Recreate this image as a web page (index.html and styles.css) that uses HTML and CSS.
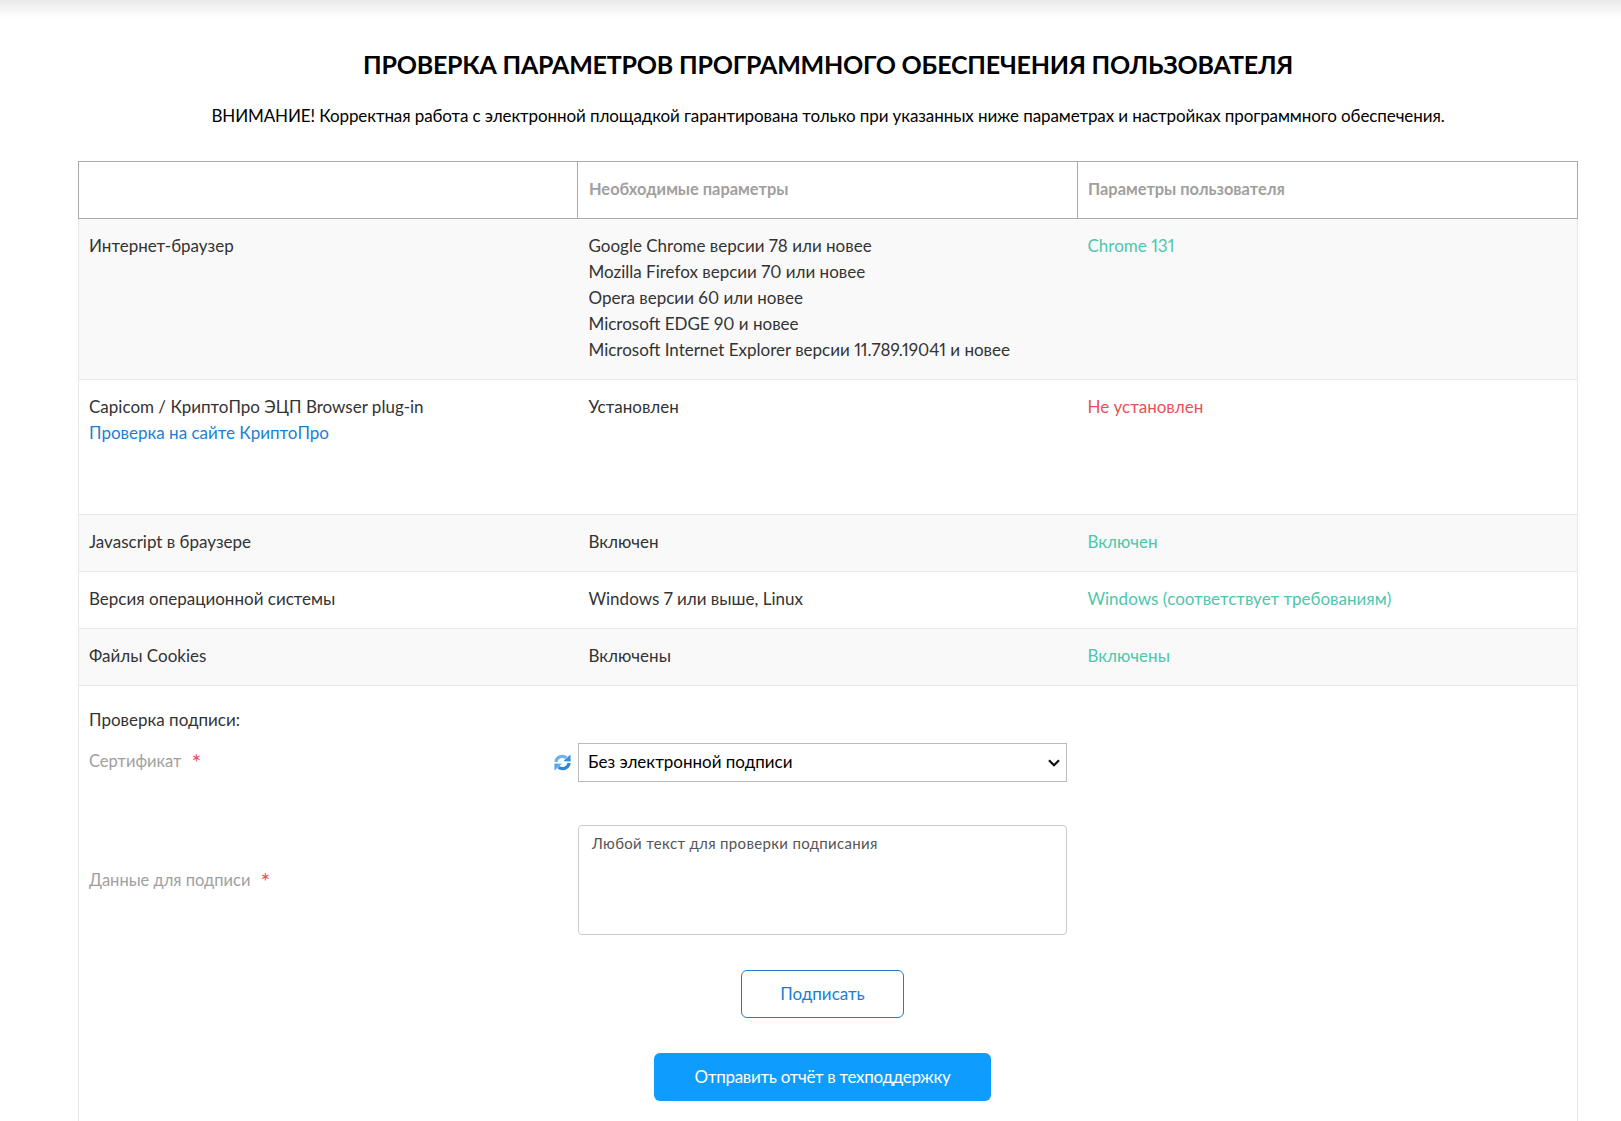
FILE: index.html
```html
<!DOCTYPE html>
<html lang="ru">
<head>
<meta charset="utf-8">
<title>Проверка параметров</title>
<link rel="stylesheet" href="styles.css">
</head>
<body>
<div class="topshade"></div>
<main class="page">
  <h1 class="title">ПРОВЕРКА ПАРАМЕТРОВ ПРОГРАММНОГО ОБЕСПЕЧЕНИЯ ПОЛЬЗОВАТЕЛЯ</h1>
  <p class="notice">ВНИМАНИЕ! Корректная работа с электронной площадкой гарантирована только при указанных ниже параметрах и настройках программного обеспечения.</p>
  <table class="params">
    <thead>
      <tr><th></th><th>Необходимые параметры</th><th>Параметры пользователя</th></tr>
    </thead>
    <tbody>
      <tr>
        <td>Интернет-браузер</td>
        <td>Google Chrome версии 78 или новее<br>Mozilla Firefox версии 70 или новее<br>Opera версии 60 или новее<br>Microsoft EDGE 90 и новее<br>Microsoft Internet Explorer версии 11.789.19041 и новее</td>
        <td class="ok">Chrome 131</td>
      </tr>
      <tr>
        <td>Capicom / КриптоПро ЭЦП Browser plug-in<br><a class="link" href="#">Проверка на сайте КриптоПро</a><br><br>&nbsp;</td>
        <td>Установлен</td>
        <td class="bad">Не установлен</td>
      </tr>
      <tr><td>Javascript в браузере</td><td>Включен</td><td class="ok">Включен</td></tr>
      <tr><td>Версия операционной системы</td><td>Windows 7 или выше, Linux</td><td class="ok">Windows (соответствует требованиям)</td></tr>
      <tr><td>Файлы Cookies</td><td>Включены</td><td class="ok">Включены</td></tr>
    </tbody>
  </table>
  <section class="sign">
    <div class="sign-title">Проверка подписи:</div>
    <div class="field field-cert">
      <div class="label-cell">
        <span class="label">Сертификат<span class="req">*</span></span>
        <svg class="refresh" viewBox="0 0 20 20" width="19" height="19" aria-hidden="true">
          <path fill="none" stroke="#6fb1ec" stroke-width="3.4" d="M3 9.5A7 7 0 0 1 14.2 5"/>
          <path fill="#3a8edc" d="M10.8 8.6 18.6 9 18.4 1.6z"/>
          <path fill="none" stroke="#2f86d8" stroke-width="3.4" d="M17 10.5A7 7 0 0 1 5.8 15"/>
          <path fill="#5aa6ea" d="M9.2 11.4 1.4 11 1.6 18.4z"/>
        </svg>
      </div>
      <select class="cert-select"><option>Без электронной подписи</option></select>
    </div>
    <div class="field field-data">
      <div class="label-cell"><span class="label">Данные для подписи<span class="req">*</span></span></div>
      <textarea class="data-input" placeholder="Любой текст для проверки подписания"></textarea>
    </div>
    <div class="actions">
      <button class="btn btn-outline" type="button">Подписать</button>
      <button class="btn btn-solid" type="button">Отправить отчёт в техподдержку</button>
    </div>
  </section>
</main>
</body>
</html>
```
FILE: styles.css
```css
* { box-sizing: border-box; }
html, body { margin: 0; height: 100%; overflow: hidden; background: #fff; }
body { font-family: Lato, "Noto Sans", sans-serif; font-size: 17px; line-height: 26px; color: #333; position: relative; font-variant-numeric: proportional-nums; }
.topshade { position: absolute; top: 0; left: 0; right: 0; height: 18px; background: linear-gradient(#e9e9e9, #fff); }
.page { padding: 48px 43px 0 78px; position: relative; }
.title { margin: 0; height: 33px; font-size: 25px; line-height: 33px; font-weight: 700; letter-spacing: -0.2px; color: #000; text-align: center; }
.notice { margin: 22px 0 32px; height: 26px; font-size: 17px; line-height: 26px; letter-spacing: -0.1px; color: #000; text-align: center; }
.params { width: 1500px; table-layout: fixed; border-collapse: collapse; }
.params th { height: 57px; padding: 0 10px 2px; text-align: left; font-weight: 700; font-size: 16.4px; color: #a0a0a0; border: 1px solid #aaa; }
.params th:nth-child(1) { width: 499px; }
.params th:nth-child(2) { width: 500px; padding-left: 11px; }
.params td { padding: 14px 10px 16px; vertical-align: top; border-bottom: 1px solid #e8e8e8; }
.params td:nth-child(2) { padding-left: 11px; }
.params tbody tr:nth-child(odd) { background: #f9f9f9; }
.params tbody td:first-child { border-left: 1px solid #e8e8e8; }
.params tbody td:last-child { border-right: 1px solid #e8e8e8; }
.ok { color: #4fc6ad; }
.bad { color: #e8515a; }
.link { color: #1a7fd4; text-decoration: none; }
.sign { width: 1500px; height: 440px; border-left: 1px solid #e8e8e8; border-right: 1px solid #e8e8e8; }
.sign-title { padding: 21px 10px 0; height: 57px; }
.field { display: grid; grid-template-columns: 499px 489px; align-items: center; }
.field-cert { height: 39px; align-items: stretch; }
.field-data { height: 110px; margin-top: 43px; }
.label-cell { display: flex; align-items: center; justify-content: space-between; padding: 0 6px 0 10px; }
.field-data .label-cell { padding-bottom: 1px; }
.field-cert .label { align-self: flex-start; margin-top: 5px; }
.label { color: #a0a0a0; font-size: 16.5px; }
.req { display: inline-block; color: #e8515a; margin-left: 10px; font-size: 23px; line-height: 1; vertical-align: -4px; }
.refresh { flex: none; }
.cert-select { appearance: none; width: 489px; height: 39px; padding: 0 26px 1px 9px; background: #fff url("data:image/svg+xml,%3Csvg xmlns='http://www.w3.org/2000/svg' width='12' height='8' viewBox='0 0 12 8'%3E%3Cpath d='M1 1.3l5 5 5-5' fill='none' stroke='%23111' stroke-width='2.2'/%3E%3C/svg%3E") no-repeat right 6px center; border: 1px solid #bbb; border-radius: 0; color: #000; font: 17px/26px Lato, "Noto Sans", sans-serif; }
.data-input { width: 489px; height: 110px; padding: 7px 13px; resize: none; border: 1px solid #ccc; border-radius: 4px; font: 15px/20px Lato, "Noto Sans", sans-serif; letter-spacing: 0.33px; outline: none; }
.data-input::placeholder { color: #555; opacity: 1; }
.actions { display: flex; flex-direction: column; align-items: center; width: 489px; margin: 35px 0 0 499px; }
.btn { height: 48px; border-radius: 6px; font: 17px/26px Lato, "Noto Sans", sans-serif; cursor: pointer; }
.btn-outline { width: 163px; background: #fff; border: 1px solid #1a7fd4; color: #1a7fd4; }
.btn-solid { width: 337px; margin-top: 35px; background: #0f9cff; border: 0; color: #fff; letter-spacing: -0.3px; }
```
